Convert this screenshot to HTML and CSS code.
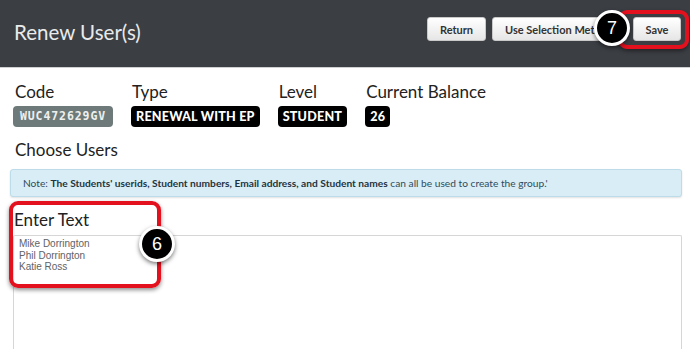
FILE: index.html
```html
<!DOCTYPE html>
<html>
<head>
<meta charset="utf-8">
<link rel="stylesheet" href="styles.css">
</head>
<body>
<header class="topbar">
  <h1 class="title">Renew User(s)</h1>
  <div class="actions">
    <button class="btn">Return</button>
    <button class="btn btn-wide">Use Selection Method</button>
    <button class="btn btn-save">Save</button>
  </div>
  <div class="hl hl-save"></div>
  <div class="step step-7">7</div>
</header>
<main class="content">
  <div class="fields">
    <div class="field">
      <div class="label">Code</div>
      <span class="tag tag-code">WUC472629GV</span>
    </div>
    <div class="field">
      <div class="label">Type</div>
      <span class="tag">RENEWAL WITH EP</span>
    </div>
    <div class="field">
      <div class="label">Level</div>
      <span class="tag">STUDENT</span>
    </div>
    <div class="field">
      <div class="label">Current Balance</div>
      <span class="tag">26</span>
    </div>
  </div>
  <div class="label section">Choose Users</div>
  <div class="note">Note: <b>The Students' userids, Student numbers, Email address, and Student names</b> can all be used to create the group.'</div>
  <div class="enter">
    <div class="label enter-label">Enter Text</div>
    <div class="textarea">Mike Dorrington<br>Phil Dorrington<br>Katie Ross</div>
    <div class="hl hl-enter"></div>
    <div class="step step-6">6</div>
  </div>
</main>
</body>
</html>
```
FILE: styles.css
```css
* { box-sizing: border-box; }
html, body { margin: 0; padding: 0; }
body {
  width: 690px;
  height: 349px;
  overflow: hidden;
  background: #fff;
  font-family: Lato, "Open Sans", sans-serif;
  color: #222;
}
.topbar {
  position: relative;
  height: 68px;
  background: #3b3e43;
  border-bottom: 1px solid #cfd0d1;
  display: flex;
  justify-content: space-between;
  align-items: flex-start;
  padding: 17px 9px 0 14px;
}
.title {
  margin: 0;
  font-weight: 400;
  font-size: 20.5px;
  line-height: 24px;
  padding-top: 3px;
  color: #e9eaeb;
}
.actions {
  display: flex;
  gap: 6px;
}
.btn {
  height: 24px;
  padding: 0 10px;
  border: 1px solid #c9c9c9;
  border-radius: 3px;
  background: linear-gradient(#ffffff, #e6e6e6);
  font-family: Lato, sans-serif;
  font-weight: 700;
  font-size: 11px;
  color: #333;
}
.btn:first-child { width: 59px; }
.btn-wide { width: 135px; text-align: left; padding-left: 12px; }
.btn-save { width: 48px; }
.hl {
  position: absolute;
  border: 4px solid #e3101e;
  border-radius: 9px;
  box-shadow: 0 2px 4px rgba(0,0,0,0.45);
}
.hl-save { left: 618px; top: 10px; width: 71px; height: 39px; }
.step {
  position: absolute;
  width: 36px;
  height: 36px;
  border-radius: 50%;
  background: #000;
  border: 3px solid #fff;
  box-shadow: 0 2px 4px rgba(0,0,0,0.5);
  color: #fff;
  font-family: "Liberation Sans", Arial, sans-serif;
  font-size: 18px;
  line-height: 30px;
  text-align: center;
}
.step-7 { left: 594px; top: 10px; }
.content {
  padding: 14px 8px 0 14px;
}
.fields {
  display: flex;
  gap: 18px;
}
.field {
  display: flex;
  flex-direction: column;
  align-items: flex-start;
}
.label {
  font-size: 17px;
  line-height: 20px;
  color: #222;
  margin-left: 1px;
}
.tag {
  margin-top: 4px;
  display: inline-block;
  height: 21px;
  padding: 0 5px;
  background: #000;
  color: #fff;
  border-radius: 4px;
  font-weight: 900;
  font-size: 12.6px;
  line-height: 21px;
  letter-spacing: 0.2px;
}
.tag-code {
  margin-left: -1px;
  width: 100px;
  background: #6d7a79;
  color: #eef0ef;
  font-family: "DejaVu Sans Mono", "Liberation Mono", monospace;
  font-weight: 700;
  font-size: 11.5px;
  letter-spacing: 0.9px;
  text-align: center;
  padding: 0;
}
.section {
  margin-top: 13px;
}
.note {
  margin: 9px 0 0 -4px;
  height: 28px;
  background: #d9edf7;
  border: 1px solid #bcdce9;
  border-radius: 3px;
  box-shadow: 0 1px 2px rgba(0,0,0,0.12);
  padding: 0 12px;
  font-size: 10.2px;
  line-height: 26px;
  color: #2f4b5a;
  white-space: nowrap;
}
.note b { color: #1f3440; }
.enter {
  position: relative;
  margin-top: 13px;
}
.enter-label {
  margin-left: 0;
}
.textarea {
  margin: 5px 0 0 -1px;
  height: 116px;
  border: 1px solid #d6d6d6;
  border-bottom: 0;
  border-radius: 2px 2px 0 0;
  padding: 2px 5px;
  font-family: "Liberation Sans", Arial, sans-serif;
  font-size: 10px;
  line-height: 11.7px;
  color: #5f6266;
}
.hl-enter { left: -5px; top: -9px; width: 152px; height: 87px; }
.step-6 { left: 125px; top: 16px; }
```
